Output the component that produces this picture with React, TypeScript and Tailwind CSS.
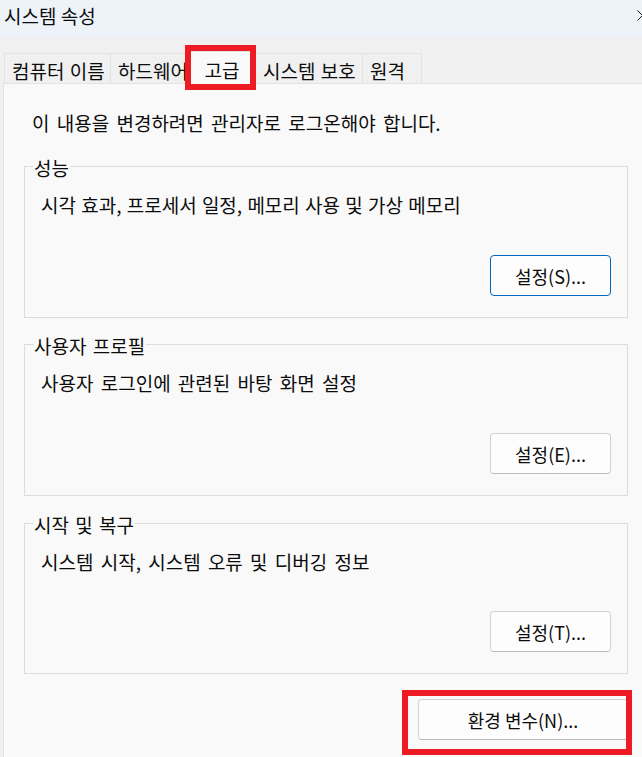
import type { FC } from "react";

const tabs = [
  { label: "컴퓨터 이름", width: "w-[107px]" },
  { label: "하드웨어", width: "w-[77px]" },
  { label: "고급", width: "w-[68px]", active: true },
  { label: "시스템 보호", width: "w-[107px]" },
  { label: "원격", width: "w-[59px]" },
];

const groups = [
  { title: "성능", text: "시각 효과, 프로세서 일정, 메모리 사용 및 가상 메모리", button: "설정(S)...", focused: true, mt: "mt-[31px]", h: "h-[152px]", ws: "[word-spacing:1px]" },
  { title: "사용자 프로필", text: "사용자 로그인에 관련된 바탕 화면 설정", button: "설정(E)...", mt: "mt-[26px]", h: "h-[152px]", ws: "[word-spacing:3px]" },
  { title: "시작 및 복구", text: "시스템 시작, 시스템 오류 및 디버깅 정보", button: "설정(T)...", mt: "mt-[27px]", h: "h-[151px]", ws: "[word-spacing:3px]" },
];

const Button: FC<{ label: string; focused?: boolean; className?: string }> = ({ label, focused, className }) => (
  <button
    className={`h-[41px] rounded-[4px] bg-[#fdfdfd] text-[18px] leading-[24px] ${
      focused ? "border border-[#0067c0]" : "border border-[#d3d3d3] border-b-[#bcbcbc]"
    } ${className ?? ""}`}
  >
    {label}
  </button>
);

const App: FC = () => {
  return (
    <div className="relative w-[642px] h-[757px] overflow-hidden bg-[#f0f0f0] text-[#0c0c0c] font-['Noto_Sans_CJK_KR','Noto_Sans',sans-serif]">
      {/* title bar */}
      <div className="h-[37px] bg-[#eef3fa] flex items-start justify-between pl-[4px] pt-[6px]">
        <span className="text-[19px] leading-none">시스템 속성</span>
        <svg width="11" height="11" viewBox="0 0 11 11" className="mt-[4px] mr-[-6px]">
          <path d="M0.5 0.5 L10.5 10.5 M10.5 0.5 L0.5 10.5" stroke="#1a1a1a" strokeWidth="1" fill="none" />
        </svg>
      </div>

      {/* tabs */}
      <div className="h-[46px] flex items-end pl-[4px]">
        {tabs.map((tab, i) =>
          tab.active ? (
            <div
              key={tab.label}
              className={`${tab.width} h-[33px] -mb-px relative z-10 flex items-center justify-center pt-[4px] bg-[#f9f9f9] border-x border-t border-[#e3e3e3] text-[19px] leading-[24px]`}
            >
              {tab.label}
            </div>
          ) : (
            <div
              key={tab.label}
              className={`${tab.width} h-[30px] flex items-center pl-[7px] pt-[4px] overflow-hidden whitespace-nowrap bg-[#f0f0f0] border-t border-r border-[#e3e3e3] ${
                i === 0 ? "border-l" : ""
              } text-[19px] leading-[24px] [word-spacing:1px]`}
            >
              {tab.label}
            </div>
          )
        )}
      </div>

      {/* panel */}
      <div className="ml-[3px] w-[660px] h-[700px] bg-[#f9f9f9] border-l border-t border-[#e3e3e3] flex flex-col">
        <p className="mt-[27px] pl-[28px] text-[19px] leading-[24px] [word-spacing:3px]">
          이 내용을 변경하려면 관리자로 로그온해야 합니다.
        </p>

        {groups.map((g) => (
          <div key={g.title} className={`${g.mt} ${g.h} ml-[20px] w-[604px] border border-[#dcdcdc] flex flex-col`}>
            <span className="-mt-[10px] ml-[8px] self-start px-[1px] bg-[#f9f9f9] text-[19px] leading-[22px] [word-spacing:2px]">
              {g.title}
            </span>
            <p className={`mt-[14px] ml-[16px] text-[19px] leading-[24px] ${g.ws}`}>{g.text}</p>
            <Button label={g.button} focused={g.focused} className="mt-auto mb-[21px] mr-[16px] self-end w-[121px]" />
          </div>
        ))}

        <Button label="환경 변수(N)..." className="mt-[25px] ml-[414px] w-[210px]" />
      </div>

      {/* annotation boxes */}
      <div className="absolute left-[185px] top-[45px] w-[71px] h-[45px] border-[6px] border-[#ed1c24] z-20" />
      <div className="absolute left-[402px] top-[690px] w-[230px] h-[65px] border-[6px] border-[#ed1c24] z-20" />
    </div>
  );
};

export default App;
